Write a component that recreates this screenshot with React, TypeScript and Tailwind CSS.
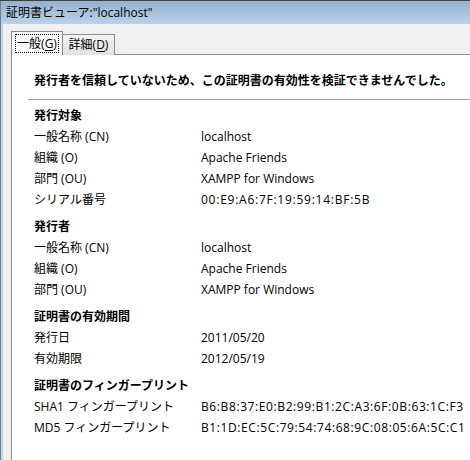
import React from "react";

const font = "font-['Open_Sans','Noto_Sans_CJK_JP',sans-serif]";

function Row({ label, value, hex, tight }: { label: string; value: string; hex?: boolean; tight?: boolean }) {
  return (
    <div className="flex h-[21px] items-center whitespace-nowrap">
      <div className="w-[167px] shrink-0">{label}</div>
      <div className={tight ? "tracking-[0.6px]" : hex ? "tracking-[0.75px]" : ""}>{value}</div>
    </div>
  );
}

function Heading({ children, first }: { children: React.ReactNode; first?: boolean }) {
  return (
    <div className={`flex h-[21px] items-center font-bold ${first ? "mt-[5px]" : "mt-[6px]"}`}>
      {children}
    </div>
  );
}

export default function App() {
  return (
    <div
      className={`w-[470px] h-[460px] overflow-hidden bg-[#f0f0f0] flex flex-col text-[12px] text-black ${font}`}
    >
      <div className="h-[1px] bg-[#3f3f3f] shrink-0" />
      <div className="flex flex-1 min-h-0">
        <div className="w-[1px] bg-[#6f7d8c] shrink-0" />
        <div className="flex-1 flex flex-col min-w-0">
          <div className="h-[23px] shrink-0 bg-gradient-to-b from-[#95b1cd] to-[#bad2eb] flex items-center pl-[5px] whitespace-nowrap">
            証明書ビューア:"localhost"
          </div>
          <div className="flex flex-1 min-h-0">
            <div className="w-[2px] bg-[#c3d5ea] shrink-0" />
            <div className="flex-1 flex flex-col pl-[8px] pt-[8px] min-w-0">
              {/* tabs */}
              <div className="flex items-end h-[23px] shrink-0 relative z-10 -mb-[1px]">
                <div className="w-[52px] h-[24px] border border-b-0 border-[#898c95] bg-white flex items-center justify-center">
                  <span className="border border-dotted border-black px-[1px] h-[19px] flex items-center leading-none">
                    一般(<span className="underline underline-offset-2">G</span>)
                  </span>
                </div>
                <div className="w-[52px] h-[21px] border border-b-0 border-l-0 border-[#898c95] bg-gradient-to-b from-[#f2f2f2] to-[#e2e2e2] flex items-center justify-center">
                  詳細(<span className="underline underline-offset-2">D</span>)
                </div>
              </div>
              {/* panel */}
              <div className="flex-1 border-t border-l border-[#898c95] bg-white min-h-0 pt-[16px] overflow-hidden">
                <div className="ml-[22px] h-[20px] flex items-center font-bold whitespace-nowrap">
                  発行者を信頼していないため、この証明書の有効性を検証できませんでした。
                </div>
                <div className="ml-[16px] mt-[8px] h-[1px] bg-[#a0a0a0]" />
                <div className="ml-[22px]">
                  <Heading first>発行対象</Heading>
                  <Row label="一般名称 (CN)" value="localhost" />
                  <Row label="組織 (O)" value="Apache Friends" />
                  <Row label="部門 (OU)" value="XAMPP for Windows" />
                  <Row label="シリアル番号" value="00:E9:A6:7F:19:59:14:BF:5B" hex />
                  <Heading>発行者</Heading>
                  <Row label="一般名称 (CN)" value="localhost" />
                  <Row label="組織 (O)" value="Apache Friends" />
                  <Row label="部門 (OU)" value="XAMPP for Windows" />
                  <Heading>証明書の有効期間</Heading>
                  <Row label="発行日" value="2011/05/20" />
                  <Row label="有効期限" value="2012/05/19" />
                  <Heading>証明書のフィンガープリント</Heading>
                  <Row
                    label="SHA1 フィンガープリント"
                    value="B6:B8:37:E0:B2:99:B1:2C:A3:6F:0B:63:1C:F3"
                    tight
                  />
                  <Row
                    label="MD5 フィンガープリント"
                    value="B1:1D:EC:5C:79:54:74:68:9C:08:05:6A:5C:C1"
                    tight
                  />
                </div>
              </div>
            </div>
          </div>
        </div>
      </div>
    </div>
  );
}
